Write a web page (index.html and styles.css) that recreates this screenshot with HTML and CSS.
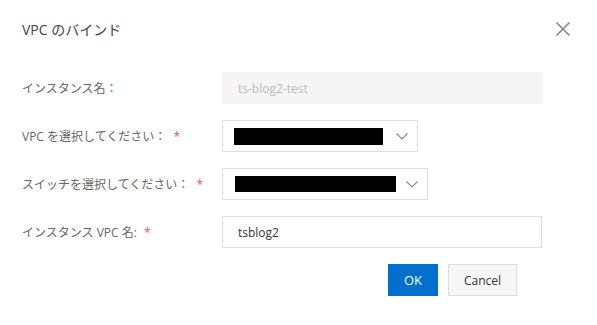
FILE: index.html
```html
<!DOCTYPE html>
<html lang="ja">
<head>
  <meta charset="UTF-8" />
  <title>VPC のバインド</title>
  <link rel="stylesheet" href="styles.css">
</head>
<body>
  <div class="dialog">
    <div class="dialog-header">
      <h2>VPC のバインド</h2>
      <button class="close" aria-label="close">
        <svg width="16" height="16" viewBox="0 0 16 16"><path d="M1.5 1.5 L14.5 14.5 M14.5 1.5 L1.5 14.5" stroke="#888" stroke-width="1.6" fill="none"/></svg>
      </button>
    </div>

    <div class="form">
      <div class="row">
        <label>インスタンス名：</label>
        <div class="field wide disabled">ts-blog2-test</div>
      </div>
      <div class="row">
        <label>VPC を選択してください： <span class="req">*</span></label>
        <div class="field select vpc">
          <span class="masked" style="width: 149px"></span>
          <svg class="arrow" width="12" height="7" viewBox="0 0 12 7"><path d="M0.5 0.5 L6 6 L11.5 0.5" stroke="#888" stroke-width="1.1" fill="none"/></svg>
        </div>
      </div>
      <div class="row">
        <label>スイッチを選択してください： <span class="req">*</span></label>
        <div class="field select vswitch">
          <span class="masked" style="width: 161px"></span>
          <svg class="arrow" width="12" height="7" viewBox="0 0 12 7"><path d="M0.5 0.5 L6 6 L11.5 0.5" stroke="#888" stroke-width="1.1" fill="none"/></svg>
        </div>
      </div>
      <div class="row">
        <label>インスタンス VPC 名: <span class="req">*</span></label>
        <div class="field wide">tsblog2</div>
      </div>
    </div>

    <div class="actions">
      <button class="btn primary">OK</button>
      <button class="btn">Cancel</button>
    </div>
  </div>
</body>
</html>
```

FILE: styles.css
```css
* {
  margin: 0;
  padding: 0;
  box-sizing: border-box;
}

body {
  font-family: "Open Sans", "Noto Sans CJK JP", sans-serif;
  background: #fff;
  color: #333;
}

.dialog {
  width: 597px;
  height: 325px;
  padding: 0 22px;
}

.dialog-header {
  height: 56px;
  display: flex;
  align-items: center;
  justify-content: space-between;
  padding-top: 2px;
}

.dialog-header h2 {
  font-size: 14px;
  font-weight: normal;
  color: #444;
}

.close {
  border: none;
  background: none;
  width: 16px;
  height: 16px;
  margin-right: 4px;
  display: flex;
}

.form {
  display: flex;
  flex-direction: column;
  gap: 16px;
  margin-top: 16px;
}

.row {
  display: flex;
  align-items: center;
  height: 32px;
}

.row label {
  width: 200px;
  font-size: 12px;
  color: #666;
}

.req {
  color: #e05a4a;
  margin-left: 4px;
}

.field {
  height: 32px;
  border: 1px solid #ddd;
  font-size: 12px;
  color: #333;
  display: flex;
  align-items: center;
  padding: 0 15px;
}

.field.wide {
  width: 320px;
}

.field.disabled {
  background: #f5f5f5;
  border-color: #f5f5f5;
  color: #bbb;
}

.field.select {
  justify-content: space-between;
  padding: 0 9px 0 11px;
}

.field.vpc {
  width: 196px;
}

.field.vswitch {
  width: 206px;
  padding-left: 12px;
}

.masked {
  display: block;
  height: 17px;
  background: #000;
}

.vswitch .masked {
  height: 16px;
}

.actions {
  display: flex;
  gap: 10px;
  margin-top: 16px;
  padding-left: 366px;
}

.btn {
  height: 32px;
  padding: 0 15px;
  border: 1px solid #ddd;
  background: #f7f7f7;
  color: #333;
  font-family: inherit;
  font-size: 12px;
}

.btn.primary {
  width: 50px;
  padding: 0;
  background: #0070cc;
  border-color: #0070cc;
  color: #fff;
  font-size: 13px;
}
```
